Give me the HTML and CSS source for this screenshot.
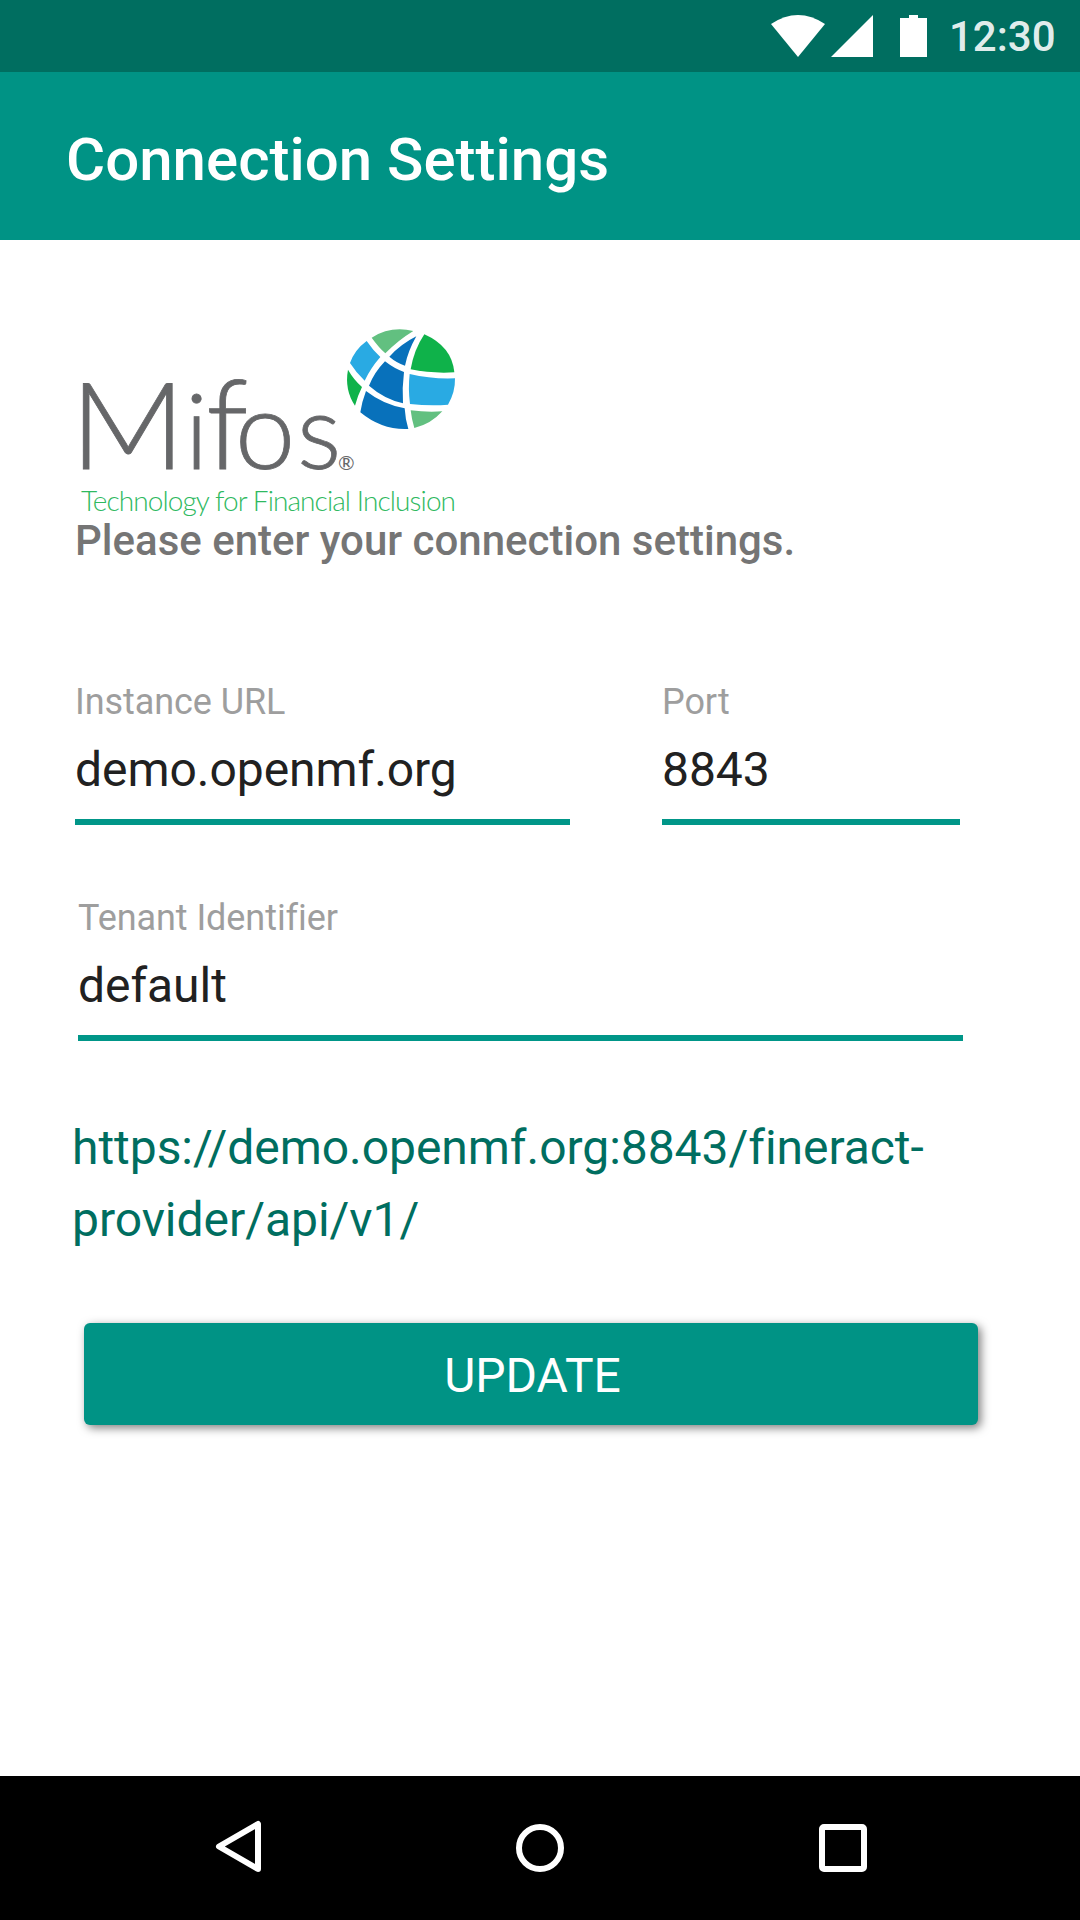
FILE: index.html
```html
<!DOCTYPE html>
<html lang="en">
<head>
<meta charset="utf-8">
<title>Connection Settings</title>
<link rel="stylesheet" href="styles.css">
</head>
<body>
<div class="status-bar">
  <svg class="status-icons" viewBox="0 0 156 42">
    <path d="M0 9Q27 -9 54 9L27 42Z"/>
    <path d="M60 42L102 0V42Z"/>
    <path d="M129 3H138V0H147V3H156V42H129Z"/>
  </svg>
  <span class="clock">12:30</span>
</div>
<header class="app-bar"><h1 class="title">Connection Settings</h1></header>
<main class="content">
  <svg class="logo" viewBox="75 320 390 196" role="img" aria-label="Mifos">
    <g transform="translate(330 310) scale(.33333)">
      <path fill="#62c080" d="M125 83Q182 47 250 63Q204 91 166 130Q146 112 125 83Z"/>
      <path fill="#29aae3" d="M110 93Q129 121 151 141Q122 174 104 212Q79 189 60 159Q74 119 110 93Z"/>
      <path fill="#0871bb" d="M259 79Q213 102 178 140Q199 158 225 167Q234 123 259 79Z"/>
      <path fill="#0fb24a" d="M283 73Q366 110 373 187Q305 191 242 178Q252 119 283 73Z"/>
      <path fill="#0871bb" d="M165 154Q193 176 222 186Q216 232 219 280Q161 266 117 227Q133 187 165 154Z"/>
      <path fill="#29aae3" d="M239 192Q306 208 375 205Q376 247 354 284Q300 288 240 282Q234 236 239 192Z"/>
      <path fill="#0fb24a" d="M54 179Q71 209 96 231Q83 257 75 287Q43 239 54 179Z"/>
      <path fill="#0871bb" d="M108 243Q159 283 224 295Q226 329 235 357Q156 361 91 307Q96 274 108 243Z"/>
      <path fill="#62c080" d="M242 301Q289 307 337 304Q302 343 253 354Q245 328 242 301Z"/>
    </g>
    <text class="wordmark wordmark-m" transform="translate(70 468.5) scale(1.06 1)">M</text>
    <text class="wordmark" y="468.5"><tspan x="185">i</tspan><tspan class="wordmark-f" x="206">f</tspan><tspan class="wordmark-o" x="235">o</tspan><tspan x="297">s</tspan></text>
    <text class="registered" x="338" y="470">®</text>
    <text class="tagline" x="81" y="511" textLength="375">Technology for Financial Inclusion</text>
  </svg>
  <p class="instruction">Please enter your connection settings.</p>
  <div class="field-row">
    <div class="field field-url"><span class="label">Instance URL</span><span class="value">demo.openmf.org</span></div>
    <div class="field field-port"><span class="label">Port</span><span class="value">8843</span></div>
  </div>
  <div class="field field-tenant"><span class="label">Tenant Identifier</span><span class="value">default</span></div>
  <p class="endpoint">https://demo.openmf.org:8843/fineract-<br>provider/api/v1/</p>
  <button class="update" type="button">UPDATE</button>
</main>
<nav class="nav-bar">
  <svg class="nav-icon" viewBox="0 0 60 60"><path d="M51 6V51L12 28.500Z"/></svg>
  <svg class="nav-icon" viewBox="0 0 60 60"><circle cx="30" cy="30" r="21"/></svg>
  <svg class="nav-icon" viewBox="0 0 60 60"><rect x="9" y="9" width="42" height="42" rx="2"/></svg>
</nav>
</body>
</html>
```
FILE: styles.css
```css
* { box-sizing: border-box; }
body {
  margin: 0;
  width: 1080px;
  height: 1920px;
  display: flex;
  flex-direction: column;
  background: #fff;
  font-family: Roboto, sans-serif;
  font-variant-ligatures: none;
}
h1, p { margin: 0; }
.status-bar {
  height: 72px;
  padding: 13px 24px 0 0;
  display: flex;
  justify-content: flex-end;
  background: #006e60;
}
.status-icons { width: 156px; height: 42px; margin-top: 2px; fill: #fff; }
.clock {
  width: 107px;
  margin-left: 22px;
  font-size: 42px;
  font-weight: 500;
  line-height: 48px;
  white-space: nowrap;
  color: rgba(255, 255, 255, .9);
}
.app-bar { height: 168px; padding: 52px 66px 0; background: #009385; }
.title { font-size: 60px; font-weight: 500; line-height: 72px; color: #fff; }
.content { flex: 1; padding: 80px 0 0 75px; }
.logo { display: block; width: 390px; height: 196px; overflow: visible; }
.wordmark { font: 300 104px Lato, sans-serif; fill: #666769; stroke: #666769; stroke-width: .8; }
.wordmark-m { font-size: 120px; }
.wordmark-f { font-size: 124px; }
.wordmark-o { font-size: 108px; }
.registered { font: 400 20px Lato, sans-serif; fill: #666769; }
.tagline { font: 300 28px Lato, sans-serif; fill: #2fb95f; }
.instruction { margin-top: 1px; font-size: 42px; font-weight: 500; line-height: 48px; color: #757575; }
.field-row { display: flex; gap: 92px; margin-top: 116px; }
.field {
  display: flex;
  flex-direction: column;
  gap: 19px;
  height: 144px;
  border-bottom: 6px solid #009688;
}
.field-url { width: 495px; }
.field-port { width: 298px; }
.field-tenant { width: 885px; margin: 72px 0 0 3px; }
.label { font-size: 36px; line-height: 42px; letter-spacing: -.07px; color: #9e9e9e; }
.value { font-size: 48px; line-height: 56px; letter-spacing: -.05px; color: #212121; }
.endpoint { margin: 71px 0 0 -3px; font-size: 48px; line-height: 72px; letter-spacing: -.04px; color: #006e60; }
.update {
  display: block;
  width: 894px;
  height: 102px;
  margin: 67px 0 0 9px;
  padding: 4px 0 0 3px;
  border: 0;
  border-radius: 6px;
  background: #009385;
  box-shadow: 3px 3px 10px rgba(0, 0, 0, .5);
  font: 400 48px/56px Roboto, sans-serif;
  color: #fff;
}
.nav-bar {
  height: 144px;
  padding: 0 207px;
  display: flex;
  justify-content: space-between;
  align-items: center;
  background: #000;
}
.nav-icon { width: 60px; height: 60px; fill: none; stroke: #fff; stroke-width: 6; stroke-linejoin: round; }
```
